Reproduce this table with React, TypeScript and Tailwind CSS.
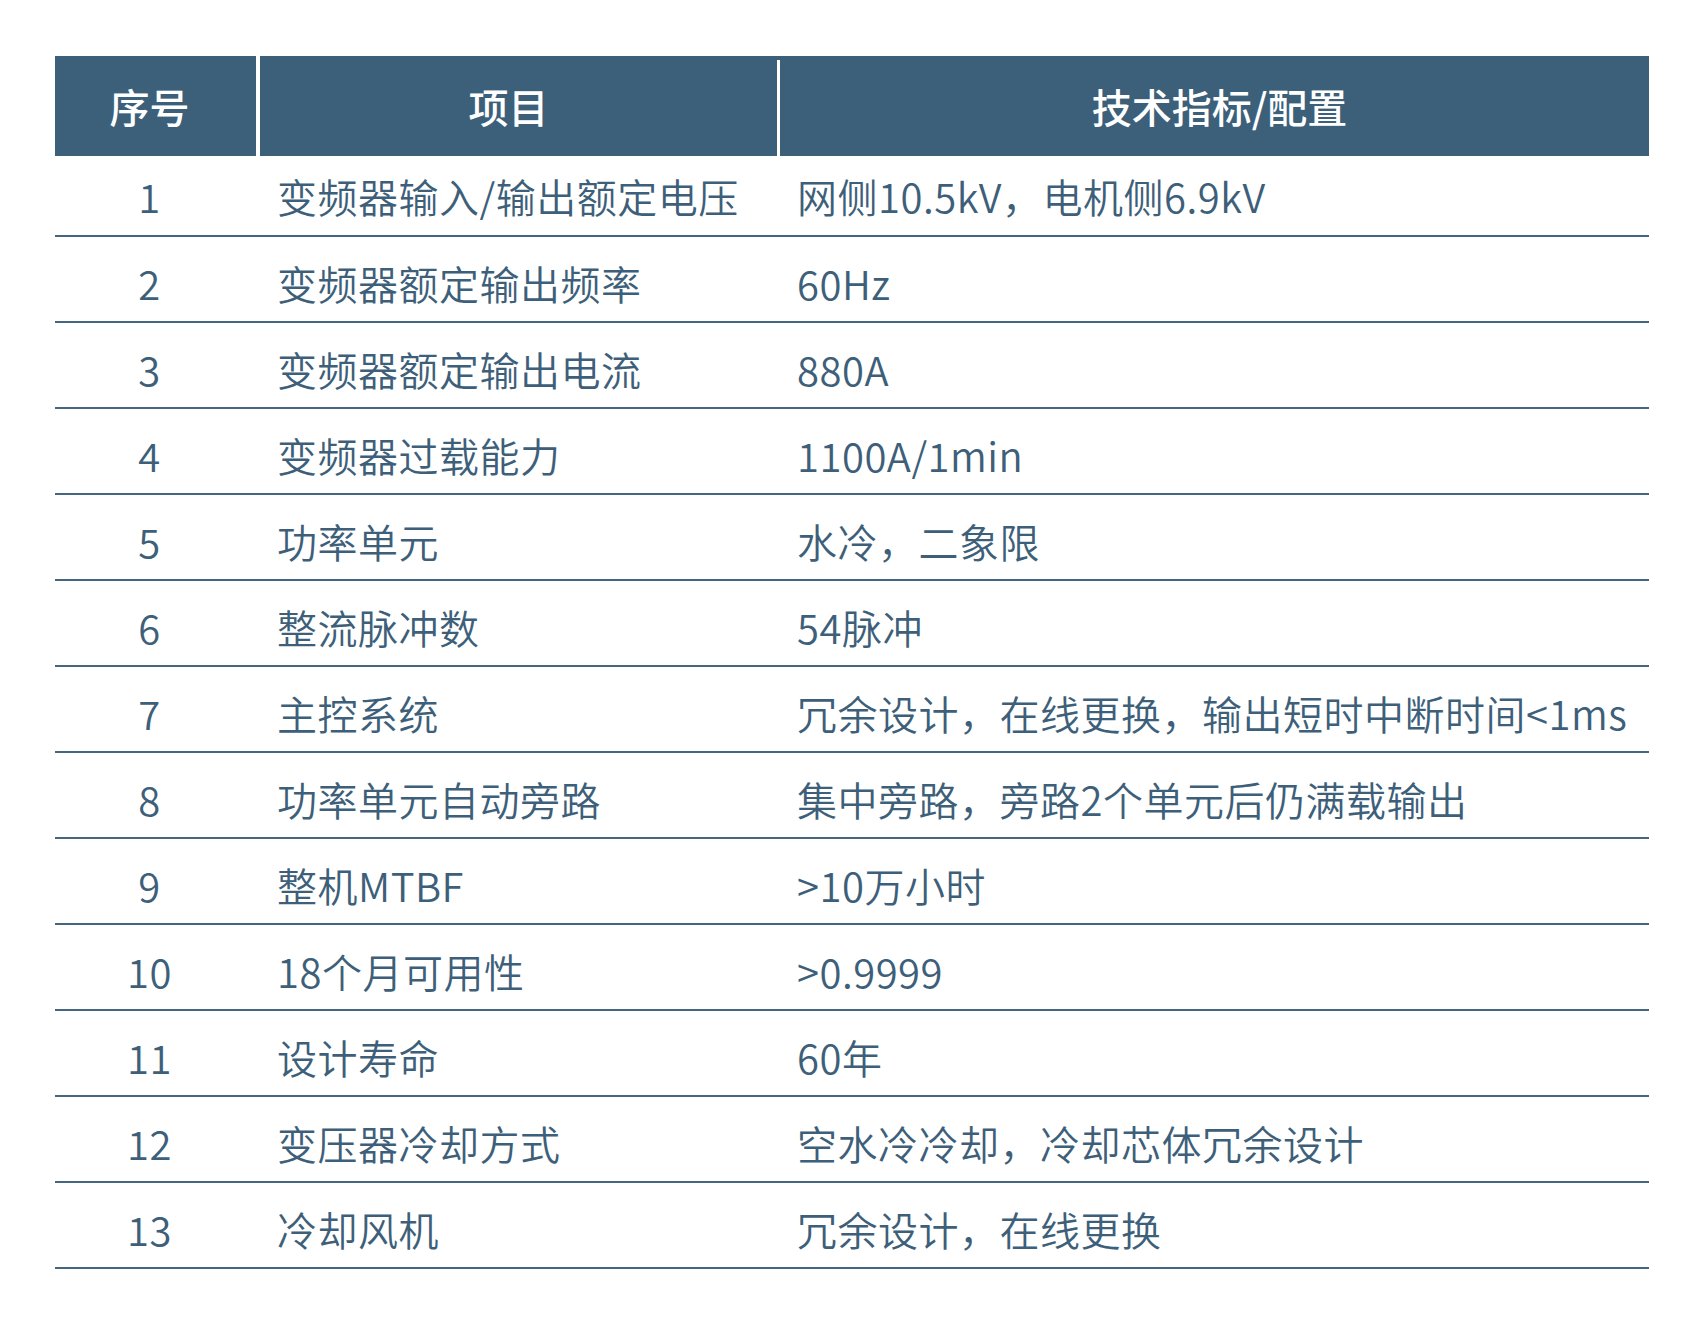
const rows: [string, string, string][] = [
  ['1', '变频器输入/输出额定电压', '网侧10.5kV，电机侧6.9kV'],
  ['2', '变频器额定输出频率', '60Hz'],
  ['3', '变频器额定输出电流', '880A'],
  ['4', '变频器过载能力', '1100A/1min'],
  ['5', '功率单元', '水冷，二象限'],
  ['6', '整流脉冲数', '54脉冲'],
  ['7', '主控系统', '冗余设计，在线更换，输出短时中断时间<1ms'],
  ['8', '功率单元自动旁路', '集中旁路，旁路2个单元后仍满载输出'],
  ['9', '整机MTBF', '>10万小时'],
  ['10', '18个月可用性', '>0.9999'],
  ['11', '设计寿命', '60年'],
  ['12', '变压器冷却方式', '空水冷冷却，冷却芯体冗余设计'],
  ['13', '冷却风机', '冗余设计，在线更换'],
];

const font = { fontFamily: '"Noto Sans CJK SC", "Noto Sans", sans-serif' };

export default function App() {
  return (
    <div className="min-h-[1332px] w-[1705px] bg-white pt-[56px] pl-[55px]" style={font}>
      <div className="w-[1594px] text-[40px] text-[#3e5f7a]">
        <div className="grid h-[100px] grid-cols-[201px_521px_1fr] bg-[#3c5f7a] font-medium text-white">
          <div className="flex items-center justify-center pr-[12px]">序号</div>
          <div className="flex items-center justify-center border-l-[4px] border-white pr-[20px]">项目</div>
          <div className="mt-[4px] flex items-center justify-center border-l-[3px] border-white pl-[10px] pb-[4px]">技术指标/配置</div>
        </div>
        {rows.map(([n, item, spec], i) => (
          <div
            key={n}
            className={`grid grid-cols-[201px_521px_1fr] items-center border-b-2 border-[#46667f] font-[350] tracking-[0.5px] ${i === 0 ? 'h-[81px] pt-[1px]' : 'h-[86px] pt-[7px]'}`}
          >
            <div className="pr-[12px] text-center">{n}</div>
            <div className="pl-[21px] whitespace-nowrap">{item}</div>
            <div className="pl-[20px] whitespace-nowrap">{spec}</div>
          </div>
        ))}
      </div>
    </div>
  );
}
